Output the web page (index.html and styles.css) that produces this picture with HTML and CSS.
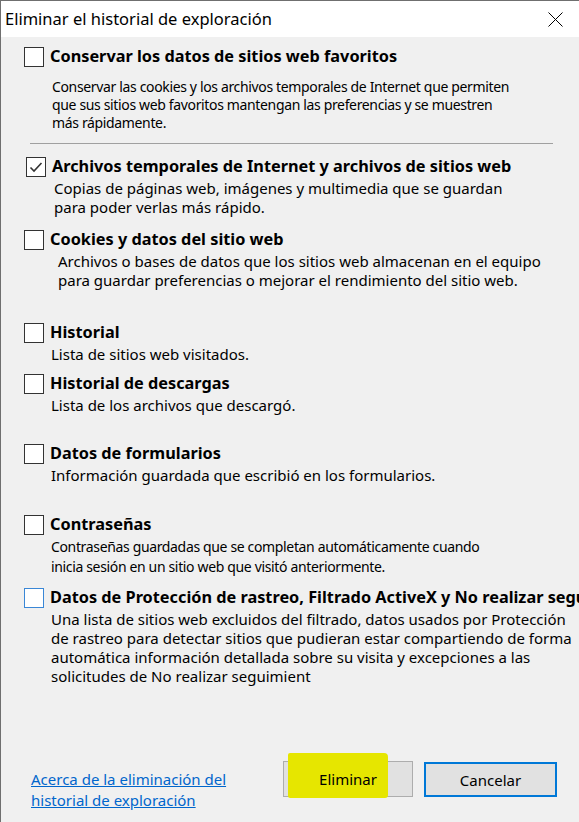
FILE: index.html
```
<!DOCTYPE html>
<html lang="es">

<head>
    <meta charset="UTF-8">
    <meta name="viewport" content="width=device-width, initial-scale=1.0">
    <title>Eliminar el historial de exploración</title>
    <link rel="stylesheet" href="styles.css">
</head>

<body>

    <div class="dialog">
        <div class="titlebar">
            <span class="title">Eliminar el historial de exploración</span>
            <svg class="close" width="15" height="15" viewBox="0 0 15 15">
                <path d="M0.5 0.5 L14.5 14.5 M14.5 0.5 L0.5 14.5" stroke="#000" stroke-width="1" fill="none" />
            </svg>
        </div>

        <div class="content">
            <div class="option">
                <div class="option-head">
                    <span class="check"></span>
                    <span class="label">Conservar los datos de sitios web favoritos</span>
                </div>
                <p class="desc desc-small desc-first">Conservar las cookies y los archivos temporales de Internet que permiten<br>que sus sitios web favoritos mantengan las preferencias y se muestren<br>más rápidamente.</p>
            </div>

            <div class="separator"></div>

            <div class="option option-checked">
                <div class="option-head">
                    <span class="check checked">
                        <svg width="18" height="18" viewBox="0 0 18 18">
                            <path d="M3.5 9.5 L7 13 L14.5 5" stroke="#333" stroke-width="1.6" fill="none" />
                        </svg>
                    </span>
                    <span class="label">Archivos temporales de Internet y archivos de sitios web</span>
                </div>
                <p class="desc">Copias de páginas web, imágenes y multimedia que se guardan<br>para poder verlas más rápido.</p>
            </div>

            <div class="option gap-sm">
                <div class="option-head">
                    <span class="check"></span>
                    <span class="label">Cookies y datos del sitio web</span>
                </div>
                <p class="desc desc-indent">Archivos o bases de datos que los sitios web almacenan en el equipo<br>para guardar preferencias o mejorar el rendimiento del sitio web.</p>
            </div>

            <div class="option gap-xl">
                <div class="option-head">
                    <span class="check"></span>
                    <span class="label">Historial</span>
                </div>
                <p class="desc desc-tight">Lista de sitios web visitados.</p>
            </div>

            <div class="option gap-xs">
                <div class="option-head">
                    <span class="check"></span>
                    <span class="label">Historial de descargas</span>
                </div>
                <p class="desc desc-tight">Lista de los archivos que descargó.</p>
            </div>

            <div class="option gap-lg">
                <div class="option-head">
                    <span class="check"></span>
                    <span class="label">Datos de formularios</span>
                </div>
                <p class="desc desc-tight">Información guardada que escribió en los formularios.</p>
            </div>

            <div class="option gap-lg2">
                <div class="option-head">
                    <span class="check"></span>
                    <span class="label">Contraseñas</span>
                </div>
                <p class="desc desc-tight desc-small desc-loose">Contraseñas guardadas que se completan automáticamente cuando<br>inicia sesión en un sitio web que visitó anteriormente.</p>
            </div>

            <div class="option gap-sm2">
                <div class="option-head">
                    <span class="check focused"></span>
                    <span class="label">Datos de Protección de rastreo, Filtrado ActiveX y No realizar seguimiento</span>
                </div>
                <p class="desc desc-tight">Una lista de sitios web excluidos del filtrado, datos usados por Protección<br>de rastreo para detectar sitios que pudieran estar compartiendo de forma<br>automática información detallada sobre su visita y excepciones a las<br>solicitudes de No realizar seguimient</p>
            </div>
        </div>

        <div class="footer">
            <a class="help-link" href="#">Acerca de la eliminación del<br>historial de exploración</a>
            <div class="buttons">
                <button class="btn btn-marked"><span class="btn-text">Eliminar</span></button>
                <button class="btn btn-default"><span class="btn-text">Cancelar</span></button>
            </div>
        </div>
    </div>

</body>

</html>
```

FILE: styles.css
```
    body {
        margin: 0;
        padding: 0;
        background: #f0f0f0;
        font-family: 'Noto Sans', 'Liberation Sans', sans-serif;
        color: #000;
    }

    .dialog {
        width: 579px;
        height: 822px;
        box-sizing: border-box;
        border-top: 1px solid #6f6f6f;
        border-left: 1px solid #6f6f6f;
        background: #f0f0f0;
        display: flex;
        flex-direction: column;
        overflow: hidden;
    }

    .titlebar {
        height: 36px;
        flex-shrink: 0;
        background: #fff;
        display: flex;
        align-items: center;
        justify-content: space-between;
        padding: 0 16px 0 4px;
    }

    .title {
        font-size: 16.5px;
        margin-top: -1px;
    }

    .close {
        display: block;
        margin-top: 1px;
    }

    .content {
        flex: 1;
        padding: 10px 0 0 23px;
    }

    .option-head {
        display: flex;
        align-items: flex-start;
        gap: 6px;
        white-space: nowrap;
    }

    .check {
        width: 20px;
        height: 20px;
        flex-shrink: 0;
        box-sizing: border-box;
        border: 1px solid #333;
        background: #fff;
        display: flex;
        align-items: center;
        justify-content: center;
    }

    .check.focused {
        border-color: #3a87d6;
    }

    .label {
        font-size: 16.3px;
        font-weight: bold;
        line-height: 18px;
    }

    .desc {
        margin: 2px 0 0;
        padding-left: 28px;
        font-size: 15px;
        line-height: 19px;
        white-space: nowrap;
    }

    /* these two blocks use a narrower face in the original */
    .desc-small {
        font-size: 14px;
        letter-spacing: -0.35px;
    }

    .desc-first {
        margin-top: 11px;
        line-height: 18px;
    }

    .desc-loose {
        line-height: 20px;
    }

    .desc-indent {
        padding-left: 34px;
    }

    .desc-tight {
        padding-left: 27px;
    }

    .separator {
        height: 1px;
        width: 523px;
        margin: 11px 0 0 6px;
        background: #a0a0a0;
    }

    .option-checked {
        margin: 13px 0 0 2px;
    }

    .gap-xs {
        margin-top: 10px;
    }

    .gap-sm {
        margin-top: 13px;
    }

    .gap-sm2 {
        margin-top: 11px;
    }

    .gap-lg {
        margin-top: 29px;
    }

    .gap-lg2 {
        margin-top: 30px;
    }

    .gap-xl {
        margin-top: 33px;
    }

    .footer {
        height: 61px;
        flex-shrink: 0;
        display: flex;
        align-items: flex-start;
        padding: 0 22px 0 30px;
    }

    .help-link {
        margin-top: 8px;
        font-size: 15px;
        line-height: 21px;
        color: #0066cc;
        text-decoration: underline;
    }

    .buttons {
        margin-left: auto;
        display: flex;
        gap: 11px;
    }

    .btn {
        height: 36px;
        font-family: 'Noto Sans', 'Liberation Sans', sans-serif;
        font-size: 15px;
        color: #000;
        background: #e1e1e1;
        border: 1px solid #adadad;
        padding: 0;
        position: relative;
    }

    .btn-text {
        position: relative;
        z-index: 1;
    }

    .btn-marked {
        width: 130px;
    }

    /* marker highlight drawn over the button */
    .btn-marked::before {
        content: "";
        position: absolute;
        left: 4px;
        top: -9px;
        width: 100px;
        height: 45px;
        background: #e6e600;
        border-radius: 2px 4px 3px 2px;
    }

    .btn-default {
        width: 133px;
        height: 35px;
        margin-top: 1px;
        border: 2px solid #0078d7;
    }
```
